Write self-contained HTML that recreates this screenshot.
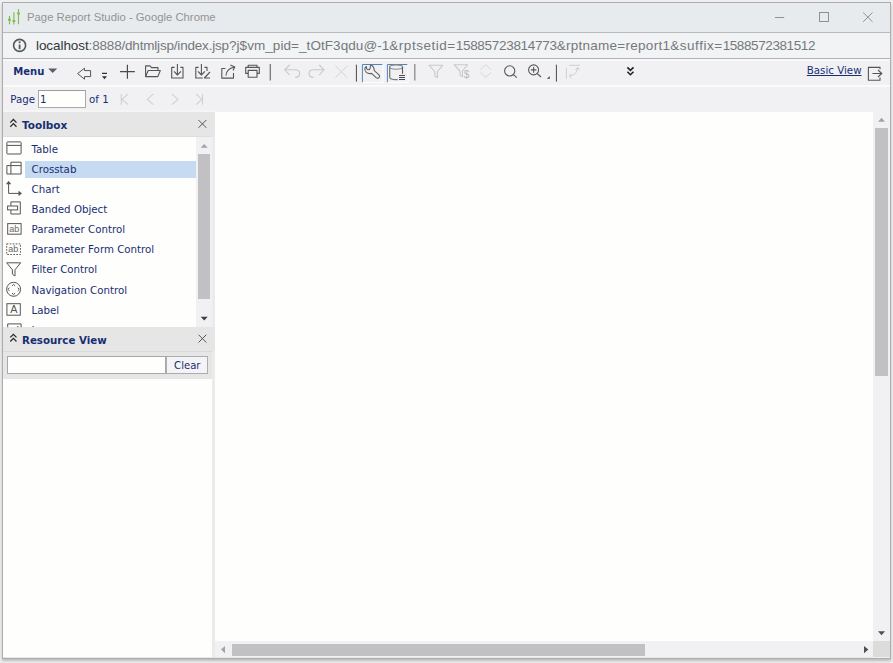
<!DOCTYPE html>
<html>
<head>
<meta charset="utf-8">
<title>Page Report Studio</title>
<style>
html,body{margin:0;padding:0;}
body{width:893px;height:663px;overflow:hidden;background:#ededed;font-family:"DejaVu Sans","Liberation Sans",sans-serif;font-size:10.25px;color:#182e72;}
.abs{position:absolute;}
#win{position:absolute;left:0;top:0;width:893px;height:663px;overflow:hidden;background:#efefef;}
#frame{position:absolute;left:2px;top:2px;width:889px;height:657px;background:#adadaf;box-shadow:0 1.5px 2.5px rgba(0,0,0,0.22);}
#inner{position:absolute;left:3px;top:3px;width:887px;height:655px;background:#f1f1f4;overflow:hidden;}
/* coordinates inside #inner are offset by (3,3) */
#title{position:absolute;left:0;top:0;width:887px;height:29px;background:#e8ebee;}
#title .txt{position:absolute;left:24px;top:7.4px;font-family:"Liberation Sans",sans-serif;font-size:11.32px;color:#939393;white-space:nowrap;line-height:14px;}
#tline{position:absolute;left:0;top:29px;width:887px;height:1px;background:#b9bbbd;}
#addr{position:absolute;left:0;top:30px;width:887px;height:25px;background:#f1f3f4;}
#addr .txt{position:absolute;left:33px;top:4.7px;font-family:"Liberation Sans",sans-serif;font-size:13.5px;color:#75787c;white-space:nowrap;line-height:16px;}
#addr .txt b{font-weight:normal;color:#34363a;}
#aline{position:absolute;left:0;top:55px;width:887px;height:1px;background:#b2b2b4;}
#tb1{position:absolute;left:0;top:56px;width:887px;height:26px;background:#f1f1f4;}
#tb1 .hl{position:absolute;left:0;top:0;width:887px;height:2px;background:#f8f8fa;}
#tbsep{position:absolute;left:0;top:81.6px;width:887px;height:2px;background:#fafafb;}
#tb2{position:absolute;left:0;top:84px;width:887px;height:25px;background:#f1f1f4;}
.t{position:absolute;white-space:nowrap;line-height:12px;}
.b{font-weight:bold;}
svg{position:absolute;left:0;top:0;overflow:visible;}
#left{position:absolute;left:0;top:108.5px;width:212px;height:546.5px;background:#e6e6e6;}
#split{position:absolute;left:209px;top:134px;width:3px;height:521px;background:#ebebeb;}
#canvas{position:absolute;left:212px;top:108.5px;width:658.3px;height:530px;background:#fefefc;}
.white{background:#fefefc;}
.track{background:#f1f1f4;}
.thumb{background:#c1c1c3;}
</style>
</head>
<body>
<div id="win">
<div id="frame"></div>
<div id="inner">
  <div id="title"><div class="txt">Page Report Studio - Google Chrome</div></div>
  <div id="tline"></div>
  <div id="addr"><div class="txt"><b style="letter-spacing:-0.076px">localhost</b><span style="letter-spacing:-0.189px">:8888/dhtmljsp/index.jsp</span><span style="letter-spacing:0.067px">?j$vm_pid=_tOtF3qdu@-1</span><span style="letter-spacing:0.524px">&amp;rptsetid=</span><span style="letter-spacing:-0.301px">15885723814773</span><span style="letter-spacing:0.276px">&amp;rptname=report1</span><span style="letter-spacing:0.531px">&amp;suffix=</span><span style="letter-spacing:-0.4px">1588572381512</span></div></div>
  <div id="aline"></div>
  <div id="tb1"><div class="hl"></div></div>
  <div id="tbsep"></div>
  <div id="tb2"></div>

  <!-- toolbar texts -->
  <div class="t b" style="left:10.2px;top:63.2px;font-size:10.05px;">Menu</div>
  <div class="t" style="left:803.8px;top:61.2px;text-decoration:underline;">Basic View</div>
  <div class="t" style="left:7.3px;top:90.1px;">Page</div>
  <div class="abs" style="left:35px;top:86.5px;width:48px;height:18px;border:1px solid #aaaaac;border-top-color:#9c9c9e;background:#fefefc;box-sizing:border-box;"></div>
  <div class="t" style="left:36.9px;top:90.1px;">1</div>
  <div class="t" style="left:86px;top:90.1px;">of 1</div>

  <!-- left panel -->
  <div class="abs" style="left:0;top:106.8px;width:212px;height:2px;background:#f5f5f6;"></div>
  <div id="left"></div>
  <div id="split"></div>
  <div class="abs" style="left:209px;top:324px;width:3px;height:24px;background:#e6e6e6;"></div>
  <div class="abs" style="left:0;top:133px;width:209px;height:1px;background:#dedede;"></div>
  <div class="abs white" style="left:0;top:134px;width:193px;height:190px;overflow:hidden;" id="list">
    <div class="abs" style="left:21.6px;top:23.6px;width:172px;height:17px;background:#c6daf2;"></div>
  </div>
  <div class="abs track" style="left:193px;top:134px;width:16px;height:190px;"></div>
  <div class="abs thumb" style="left:195px;top:151px;width:12px;height:145px;"></div>
  <div class="t b" style="left:19px;top:115.8px;font-size:10.5px;">Toolbox</div>
  <div class="t b" style="left:19px;top:330.8px;font-size:10.25px;">Resource View</div>
  <div class="abs" style="left:0;top:348px;width:209px;height:1px;background:#dadada;"></div>
  <div class="abs" style="left:4px;top:353px;width:158.5px;height:18px;border:1px solid #a8a8a8;background:#fefefc;box-sizing:border-box;"></div>
  <div class="abs" style="left:162.5px;top:353px;width:42.5px;height:18px;border:1px solid #adadad;background:#f4f4f6;box-sizing:border-box;"></div>
  <div class="t" style="left:171.1px;top:357.1px;font-size:10.1px;">Clear</div>
  <div class="abs white" style="left:0;top:376px;width:209px;height:277.5px;"></div>
  

  <!-- list item labels -->
  <div class="t" style="left:28.5px;top:139.8px;">Table</div>
  <div class="t" style="left:28.5px;top:159.9px;">Crosstab</div>
  <div class="t" style="left:28.5px;top:180.0px;">Chart</div>
  <div class="t" style="left:28.5px;top:200.1px;">Banded Object</div>
  <div class="t" style="left:28.5px;top:220.1px;">Parameter Control</div>
  <div class="t" style="left:28.5px;top:240.3px;">Parameter Form Control</div>
  <div class="t" style="left:28.5px;top:260.4px;">Filter Control</div>
  <div class="t" style="left:28.5px;top:280.5px;">Navigation Control</div>
  <div class="t" style="left:28.5px;top:300.6px;">Label</div>
  <div class="abs" style="left:28.5px;top:320.7px;height:3.7px;overflow:hidden;width:60px;"><div class="t" style="left:0;top:0;">Image</div></div>

  <!-- canvas -->
  <div id="canvas"></div>
  <div class="abs track" style="left:870.3px;top:108.5px;width:16.7px;height:530px;"></div>
  <div class="abs thumb" style="left:872px;top:125px;width:13px;height:248px;"></div>
  <div class="abs track" style="left:212px;top:638.3px;width:658.3px;height:17px;"></div>
  <div class="abs thumb" style="left:228.5px;top:641px;width:413.5px;height:12px;"></div>
  <div class="abs" style="left:870.3px;top:638.3px;width:16.7px;height:15.3px;background:#dcdcda;"></div>

  <div class="abs" style="left:0;top:653.6px;width:870px;height:1.4px;background:#e8e8e8;"></div>
  <svg width="887" height="655" viewBox="3 3 887 655" id="icons" fill="none" stroke-linecap="butt">
    <!-- title bar -->
    <g stroke="#82bb52" stroke-width="1.15">
      <path d="M9.5,16 V24.2 M13.9,12.3 V24.4 M18.5,9 V24.2"/>
      <path d="M8.1,19.7 H10.9 M12.5,21 H15.3 M17.1,13.5 H19.9" stroke-width="1.9"/>
    </g>
    <g stroke="#919191" stroke-width="1">
      <path d="M775,17.5 H784.2"/>
      <rect x="819.5" y="12.5" width="9" height="9"/>
      <path d="M863.2,12.5 L872.5,21.8 M872.5,12.5 L863.2,21.8"/>
    </g>
    <!-- address info icon -->
    <circle cx="19.6" cy="45.4" r="6" stroke="#56595d" stroke-width="1.6"/>
    <path d="M19.6,44.5 V49.2" stroke="#56595d" stroke-width="1.8"/>
    <circle cx="19.6" cy="42.2" r="1.05" fill="#56595d"/>

    <!-- toolbar 1 -->
    <path d="M48.2,68.4 H57.2 L52.7,73 Z" fill="#5a5e6a"/>
    <g stroke="#555" stroke-width="1">
      <path d="M77.6,73.6 L84.5,68.2 V70.6 H90.6 V76.6 H84.5 V79.2 Z"/>
    </g>
    <path d="M102,72.8 H107 V74 H102 Z M102,76.3 H107 L104.5,79.2 Z" fill="#333"/>
    <path d="M120,71.7 H134.8 M127.4,64.7 V78.8" stroke="#4a4a52" stroke-width="1.2"/>
    <g stroke="#555" stroke-width="1.1" stroke-linejoin="round">
      <path d="M145.6,76.6 V65.9 H150 L151.5,67.6 H158 V70.4"/>
      <path d="M145.6,76.6 L148.2,70.5 H160.3 L157.8,76.6 Z"/>
      <!-- save -->
      <path d="M174.6,67.4 H171.7 V78 H183 V67.4 H180.4"/>
      <path d="M177.4,64 V75 M174,71.4 L177.4,75 L180.9,71.4"/>
      <!-- save as -->
      <path d="M198.6,67.4 H195.8 V78 H202.8 M204.4,67.4 H207 V71"/>
      <path d="M201.4,64 V75 M198,71.4 L201.4,75 L204.9,71.4"/>
      <path d="M210,72 L204.4,78 H210"/>
      <!-- export -->
      <path d="M225.4,68.5 H221.8 V78.1 H233.5 V73"/>
      <path d="M226,75.6 Q226.4,68.6 234,67.2 M230.4,64.9 L234.8,67 L233,70.6"/>
      <!-- print -->
      <path d="M248.2,73.4 H245.7 V67.4 H259.3 V73.4 H257"/>
      <path d="M248.2,67.4 V65.3 H257 V67.4"/>
      <rect x="248.2" y="70.4" width="8.8" height="6.8"/>
    </g>
    <path d="M270.3,64 V80.6" stroke="#777" stroke-width="1.3"/>
    <g stroke="#c9c9cb" stroke-width="1.1">
      <path d="M289.6,65 L284.6,69.8 L289.6,74.8 M284.6,69.8 H295.4 Q299.7,70 299.7,73.6 Q299.5,77.2 295.2,77.4"/>
      <path d="M319.3,65 L324,69.8 L319.3,74.8 M324,69.8 H313.2 Q309,70 309,73.6 Q309.2,77.2 313.6,77.4"/>
    </g>
    <path d="M335.4,65.8 L347.4,77.7 M347.4,65.8 L335.4,77.7" stroke="#d3d3d5" stroke-width="1"/>
    <path d="M356.4,64.7 V81.7" stroke="#4a4a4a" stroke-width="1"/>
    <!-- pressed buttons -->
    <path d="M362.4,82.2 V64.5 H382.3" stroke="#5285ba" stroke-width="1"/>
    <path d="M363,82.6 H383 V65" stroke="#fdfdfd" stroke-width="1"/>
    <path d="M387.4,82.2 V64.5 H407.3" stroke="#5285ba" stroke-width="1"/>
    <path d="M388,82.6 H408 V65" stroke="#fdfdfd" stroke-width="1"/>
    <!-- wrench -->
    <path d="M366.3,66.4 Q366.2,69.6 368.6,69.8 Q370.6,69.6 370.4,65.3 L371.6,65.2 Q374.2,66.6 374.3,70.6 L379.2,75.1 Q380.2,76.8 378.8,77.8 Q377.3,78.7 376.1,77.7 L371.6,73.4 Q368.5,74.2 366.3,72.4 Q364.4,70.4 364.9,68.2 Q365.2,67 366.3,66.4 Z" stroke="#626262" stroke-width="1.1" stroke-linejoin="round"/>
    <!-- cylinder -->
    <g stroke="#777" stroke-width="1.1">
      <ellipse cx="396.1" cy="67.1" rx="6.5" ry="2.2" stroke="#8c8c8c"/>
      <path d="M389.7,67 V77 Q389.9,79.6 396,79.6 H397.8" stroke="#7c7c7c" stroke-width="1.3"/>
      <path d="M402.5,67 V73.8" stroke="#5c5c5c"/>
    </g>
    <path d="M399,75.5 H405 M399,77.5 H405 M399,79.5 H405" stroke="#4c4c4c" stroke-width="1"/>
    <path d="M414.8,64 V80.6" stroke="#8a8a8a" stroke-width="1.3"/>
    <g stroke="#c9c9cb" stroke-width="1.1" stroke-linejoin="round">
      <path d="M429.2,65.3 H442.6 L437.4,71.5 V77.6 L434.9,76.2 V71.5 Z"/>
      <path d="M454.1,64.7 H467.6 L462.5,71 V76.6 L460,75.2 V71 Z"/>
    </g>
    <text x="463.8" y="78.4" font-family="Liberation Sans, sans-serif" font-size="10" fill="#b9b9bb" stroke="none">$</text>
    <path d="M480.5,69.8 L485.7,64.6 L491,69.8 M480.5,72.3 L485.7,77.4 L491,72.3" stroke="#d6d6d8" stroke-width="1"/>
    <g stroke="#575757" stroke-width="1.1">
      <circle cx="509.7" cy="70.9" r="5.1"/>
      <path d="M513.4,74.6 L516.8,77.7"/>
      <circle cx="533.6" cy="69.9" r="5"/>
      <path d="M537.2,73.5 L541,77" />
      <path d="M530.8,69.9 H536.4 M533.6,67.1 V72.7" stroke-width="1.1"/>
    </g>
    <path d="M549.8,76.2 V78.8 H546.8 Z" fill="#444"/>
    <path d="M556.4,64.7 V81.7" stroke="#4a4a4a" stroke-width="1"/>
    <g stroke="#d0d0d2" stroke-width="1">
      <path d="M569,65.3 H580 M566.4,67.6 V78.8"/>
      <path d="M569.6,76 Q577,75 577.6,67.8 M575.5,70 L577.6,67.4 L579.8,70 M571.6,73.8 L569.2,76 L571.6,78.2"/>
    </g>
    <path d="M627.4,67.4 L630.4,70.4 L633.5,67.4 M627.4,71.7 L630.4,74.7 L633.5,71.7" stroke="#222" stroke-width="1.6"/>
    <g stroke="#555" stroke-width="1.1">
      <path d="M880,69.2 V67.4 H868.4 V80.2 H880 V77.4"/>
      <path d="M872.4,73.5 H881.8 M878,70 L881.8,73.5 L878,77"/>
    </g>
    <!-- toolbar 2 nav -->
    <g stroke="#d0d0d2" stroke-width="1.1">
      <path d="M121.3,93.9 V104.7 M128.2,93.9 L121.9,99.4 L128.2,104.7"/>
      <path d="M153.4,93.9 L147.3,99.4 L153.4,104.7"/>
      <path d="M171.9,93.9 L177.8,99.4 L171.9,104.7"/>
      <path d="M202.5,93.9 V104.7 M196.2,93.9 L201.9,99.4 L196.2,104.7"/>
    </g>
    <!-- panel headers -->
    <g stroke="#2a2a2a" stroke-width="1.25">
      <path d="M10.3,122.6 L13.4,119.5 L16.5,122.6 M10.3,126.7 L13.4,123.6 L16.5,126.7"/>
      <path d="M10.3,337.4 L13.4,334.3 L16.5,337.4 M10.3,341.5 L13.4,338.4 L16.5,341.5"/>
    </g>
    <g stroke="#555" stroke-width="1">
      <path d="M198.5,120 L206.3,127.8 M206.3,120 L198.5,127.8"/>
      <path d="M198.5,334.7 L206.3,342.5 M206.3,334.7 L198.5,342.5"/>
    </g>
    <!-- scroll arrows -->
    <path d="M200.7,147.8 L204.2,144 L207.7,147.8 Z" fill="#a3a3a3"/>
    <path d="M200.7,316.8 H207.7 L204.2,320.5 Z" fill="#404040"/>
    <path d="M878,121.7 L881.5,117.8 L885,121.7 Z" fill="#a3a3a3"/>
    <path d="M878,631.2 H885 L881.5,635.2 Z" fill="#505050"/>
    <path d="M225,646 V653.2 L221,649.6 Z" fill="#a3a3a3"/>
    <path d="M864,646 V653.2 L868.4,649.6 Z" fill="#505050"/>
    <!-- toolbox list icons -->
    <g stroke="#555" stroke-width="1">
      <rect x="6.9" y="141.9" width="14.2" height="12.1" rx="0.6"/>
      <path d="M6.9,145.4 H21.1"/>
      <path d="M10.9,174 V162.2 H21.1 V174 H6.9 V165.6 H21.1"/>
      <path d="M8.6,182.5 V193.4 H20"/><path d="M6.5,184 L8.6,181.2 L10.7,184 Z M18.8,191.3 L21.6,193.4 L18.8,195.5 Z" fill="#555" stroke-width="0.6"/>
      <path d="M10.9,205.8 V201.9 H20.3 V214 H10.9 V210"/>
      <rect x="7.6" y="206" width="10" height="3.9"/>
      <rect x="7.7" y="223.6" width="13.4" height="10.6"/>
      <rect x="6.7" y="243.9" width="13.8" height="10.6" stroke-dasharray="1.6 1.4"/>
      <path d="M6.7,262.8 H20.7 L15,269.8 V276 L12.4,274.1 V269.8 Z"/>
      <circle cx="13.6" cy="289.3" r="7"/>
      <path d="M12,285.9 L13.6,284.4 L15.2,285.9 M12,293.1 L13.6,294.6 L15.2,293.1 M9.5,287.7 L7.9,289.3 L9.5,290.9 M17.7,287.7 L19.3,289.3 L17.7,290.9" stroke-width="1"/>
      <rect x="6.9" y="303.7" width="13.4" height="11.5"/>
      <path d="M7.7,327.2 V323.9 H21.1 V327.2"/>
    </g>
    <circle cx="17.8" cy="326.6" r="0.7" fill="#555"/>
    <g font-family="Liberation Sans, sans-serif" fill="#666" stroke="none">
      <text x="9.2" y="232" font-size="9">ab</text>
      <text x="8.2" y="252.2" font-size="9">ab</text>
      <text x="10.3" y="313.4" font-size="10.8" fill="#555">A</text>
    </g>
  </svg>
</div>
</div>
</body>
</html>
